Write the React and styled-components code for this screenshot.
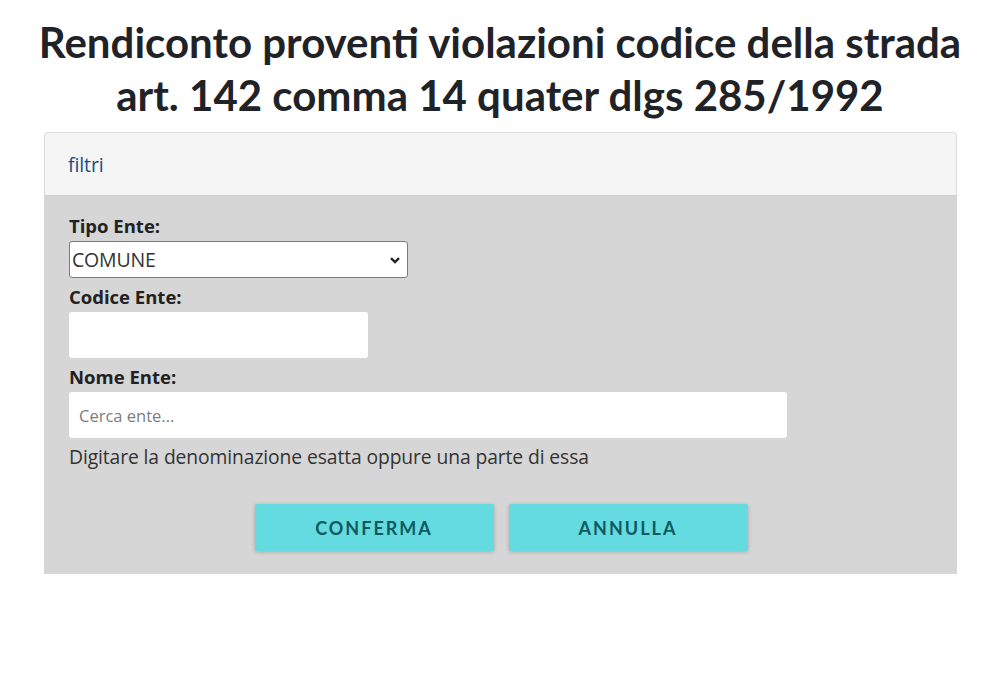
import styled, { createGlobalStyle } from "styled-components";

const GlobalStyle = createGlobalStyle`
  body {
    margin: 0;
    background: #ffffff;
    font-family: "Open Sans", Lato, sans-serif;
    color: #222;
  }
`;

const Page = styled.div`
  width: 1000px;
  display: flex;
  flex-direction: column;
  align-items: center;
`;

const Title = styled.h1`
  margin: 16px 0 10px;
  font-family: Lato, sans-serif;
  font-weight: 700;
  font-size: 42px;
  line-height: 53px;
  text-align: center;
  color: #1f2328;
`;

const Panel = styled.section`
  width: 913px;
  margin-left: 1px;
`;

const PanelHeader = styled.div`
  height: 64px;
  box-sizing: border-box;
  padding: 0 23px;
  display: flex;
  align-items: center;
  background: #f5f5f5;
  border: 1px solid #dcdcdc;
  border-bottom-color: #d0d0d0;
  border-radius: 4px 4px 0 0;
  color: #1b4c84;
  font-size: 19.5px;
  letter-spacing: -0.1px;
`;

const PanelBody = styled.div`
  background: #d6d6d6;
  padding: 18px 24px 23px 25px;
  display: flex;
  flex-direction: column;
`;

const Label = styled.label`
  font-weight: 700;
  font-size: 18.5px;
  line-height: 24px;
  color: #222;
  margin-bottom: 3px;
`;

const SelectBox = styled.div`
  width: 339px;
  height: 37px;
  box-sizing: border-box;
  background: #fff;
  border: 1px solid #7a7a7a;
  border-radius: 3px;
  display: flex;
  align-items: center;
  padding: 0 6px 0 2px;
  justify-content: space-between;
  font-size: 19.5px;
  letter-spacing: -0.2px;
  color: #333;
  margin-bottom: 7px;
`;

const TextField = styled.div`
  width: ${(p) => p.$w}px;
  height: 46px;
  box-sizing: border-box;
  background: #fff;
  border-radius: 3px;
  display: flex;
  align-items: center;
  padding: 0 10px;
  font-size: 16.5px;
  color: #7d7d7d;
  margin-bottom: ${(p) => p.$mb || 0}px;
`;

const Help = styled.p`
  margin: 6px 0 0;
  font-size: 19.3px;
  line-height: 26px;
  letter-spacing: -0.1px;
  color: #333;
`;

const Actions = styled.div`
  display: flex;
  justify-content: center;
  gap: 15px;
  margin-top: 34px;
`;

const Button = styled.button`
  width: 239px;
  height: 47px;
  border: none;
  border-radius: 2px;
  background: #63dbe0;
  box-shadow: 0 1px 4px rgba(0, 0, 0, 0.22);
  color: #0f5a5e;
  font-family: Lato, sans-serif;
  font-weight: 700;
  font-size: 18px;
  letter-spacing: 2px;
  cursor: pointer;
`;

function Chevron() {
  return (
    <svg width="12" height="12" viewBox="0 0 12 12">
      <path d="M2 4.2 L6 8 L10 4.2" fill="none" stroke="#222" strokeWidth="2.4" />
    </svg>
  );
}

export default function App() {
  return (
    <>
      <GlobalStyle />
      <Page>
        <Title>
          Rendiconto proventi violazioni codice della strada
          <br />
          art. 142 comma 14 quater dlgs 285/1992
        </Title>
        <Panel>
          <PanelHeader>filtri</PanelHeader>
          <PanelBody>
            <Label>Tipo Ente:</Label>
            <SelectBox>
              <span>COMUNE</span>
              <Chevron />
            </SelectBox>
            <Label>Codice Ente:</Label>
            <TextField $w={299} $mb={7} />
            <Label>Nome Ente:</Label>
            <TextField $w={718}>Cerca ente...</TextField>
            <Help>Digitare la denominazione esatta oppure una parte di essa</Help>
            <Actions>
              <Button>CONFERMA</Button>
              <Button>ANNULLA</Button>
            </Actions>
          </PanelBody>
        </Panel>
      </Page>
    </>
  );
}
